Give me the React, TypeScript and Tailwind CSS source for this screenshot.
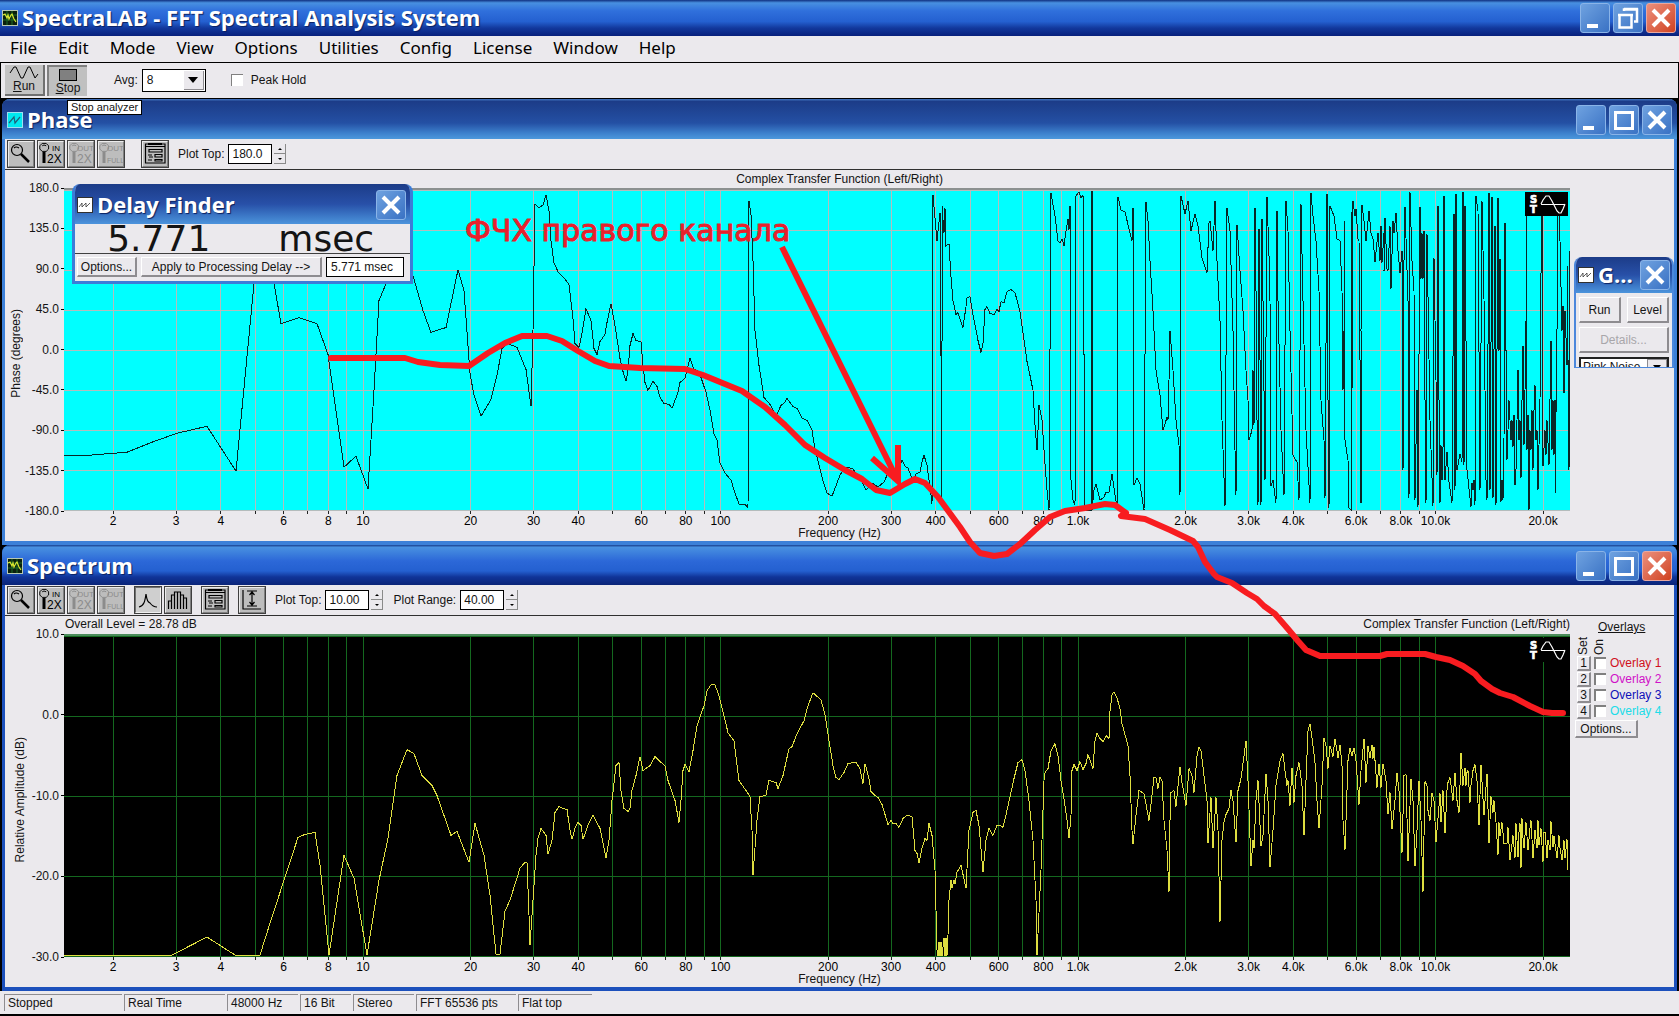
import type { ReactNode } from "react"
import clsx from "clsx"

const menuItems = ["File", "Edit", "Mode", "View", "Options", "Utilities", "Config", "License", "Window", "Help"]

const statusCells = [
  { text: "Stopped", width: "w-[118px]" },
  { text: "Real Time", width: "w-[101px]" },
  { text: "48000 Hz", width: "w-[71px]" },
  { text: "16 Bit", width: "w-[51px]" },
  { text: "Stereo", width: "w-[61px]" },
  { text: "FFT 65536 pts", width: "w-[100px]" },
  { text: "Flat top", width: "w-[74px]" },
]

const overlays = [
  { id: 1, color: "text-[#d01020]" },
  { id: 2, color: "text-[#d010c8]" },
  { id: 3, color: "text-[#1010b8]" },
  { id: 4, color: "text-[#20dce8]" },
]

// Both plots share the same logarithmic frequency axis
const PLOT_X = 64
const PLOT_W = 1506
const DECADE = 357.5
const freqToX = (hz: number) => 363 + (Math.log10(hz) - 1) * DECADE - PLOT_X

const gridFreqs: number[] = []
for (const base of [1, 10, 100, 1000, 10000]) {
  for (let n = 1; n < 10; n++) {
    const hz = base * n
    if (hz >= 2 && hz <= 20000) gridFreqs.push(hz)
  }
}

const freqLabels = gridFreqs
  .filter((hz) => [1, 2, 3, 4, 6, 8].includes(Number(String(hz)[0])))
  .map((hz) => ({ hz, text: hz >= 1000 ? `${(hz / 1000).toFixed(1)}k` : String(hz) }))

const phaseTrace =
  "64,455 90,455 127,452 152,442 177,433 207,426 236,471 254,283 258,230 270,250 274,283 281,323 299,317 317,323 328,354 344,467 356,456 368,489 374,390 379,300 386,283 396,240 413,275 423,310 431,332 436,330 446,327 458,269 464,290 470,373 474,395 481,416 491,399 497,375 502,348 508,343 517,347 526,369 531,406 533,330 535,203 539,207 543,204 546,194 549,210 551,240 554,262 558,271 564,277 569,284 573,318 575,343 579,347 582,333 586,308 591,320 594,348 597,354 600,341 605,334 607,322 611,303 615,325 620,358 623,371 626,381 628,370 630,345 633,333 636,340 641,341 643,365 645,382 648,390 653,381 657,386 660,397 664,403 669,404 672,408 678,392 680,382 685,378 690,358 694,369 699,371 703,383 706,392 710,410 714,434 717,440 720,463 725,473 731,480 735,493 739,504 745,504 748,508 749,200 751,214 753,260 755,330 759,365 764,397 770,404 776,416 781,405 784,403 787,398 793,406 797,408 802,418 807,420 812,430 815,449 819,465 823,481 827,493 832,496 837,483 840,475 843,470 848,467 853,469 860,478 866,490 872,483 878,487 884,482 887,475 894,470 899,469 902,460 905,466 908,468 913,481 916,474 920,472 922,462 924,455 927,465 931,495 932,504 933,194 937,240 940,212 941,356 941,502 942,340 942,205 944,232 945,207 946,245 949,243 951,276 953,300 956,314 958,312 960,318 963,327 966,306 967,297 970,296 973,314 978,340 981,352 983,343 985,309 987,306 990,313 994,314 997,309 999,311 1001,301 1004,302 1007,291 1011,289 1015,292 1020,311 1023,332 1027,361 1030,375 1033,390 1035,425 1037,450 1038,430 1039,405 1042,420 1044,450 1047,490 1049,510 1051,192 1055,215 1058,240 1060,242 1062,238 1064,245 1066,230 1068,218 1069,229 1070,205 1071,480 1073,500 1075,505 1076,195 1079,191 1081,197 1083,194 1085,510 1091,510 1091,191 1092,191 1092,510 1094,490 1096,484 1100,500 1104,497 1106,492 1109,492 1112,474 1114,488 1117,508 1118,196 1121,209 1125,211 1129,228 1132,240 1133,207 1134,485 1137,478 1140,484 1144,510 1146,201 1148,220 1150,260 1153,310 1156,370 1160,395 1163,430 1167,417 1168,420 1169,380 1170,330 1173,370 1176,420 1179,445 1180,495 1181,195 1185,213 1188,200 1191,230 1195,213 1198,225 1202,257 1207,272 1209,222 1210,220 1213,250 1215,200 1217,260 1220,320 1222,420 1225,506 1227,207 1230,230 1233,330 1235,450 1236,495 1237,224 1240,270 1243,310 1246,370 1248,400 1249,440 1252,430 1253,370 1254,425 1255,207 1256,290 1257,420 1258,505 1259,228 1260,360 1261,505 1262,218 1263,300 1265,480 1267,196 1269,255 1270,300 1271,486 1273,480 1276,503 1277,210 1278,300 1281,430 1284,495 1286,200 1288,230 1290,330 1293,455 1297,462 1299,500 1301,203 1303,300 1306,430 1310,503 1311,192 1313,215 1316,240 1319,290 1321,400 1324,440 1325,498 1327,193 1328,400 1329,508 1330,205 1334,215 1337,238 1340,240 1342,290 1343,390 1344,330 1344,220 1345,440 1348,460 1349,508 1351,510 1351,211 1352,390 1353,200 1355,215 1356,208 1358,238 1359,240 1360,360 1361,503 1361,330 1362,204 1364,220 1366,240 1369,210 1371,232 1373,238 1375,261 1378,232 1380,260 1381,225 1382,262 1384,232 1384,270 1385,217 1387,268 1388,270 1390,225 1391,288 1393,220 1394,232 1395,222 1396,212 1398,250 1400,272 1402,250 1403,470 1404,260 1405,206 1408,300 1409,498 1410,191 1412,260 1414,290 1415,500 1417,390 1418,507 1420,206 1421,278 1422,232 1423,278 1424,230 1425,400 1426,503 1427,233 1430,420 1433,506 1434,257 1436,380 1437,475 1438,205 1439,400 1440,503 1441,445 1442,480 1443,450 1444,195 1444,340 1445,480 1447,452 1449,482 1452,503 1454,213 1455,490 1456,193 1457,470 1460,454 1462,462 1463,191 1464,465 1465,205 1466,340 1467,470 1471,507 1472,483 1473,490 1474,480 1475,505 1476,195 1478,210 1480,490 1482,200 1484,298 1486,480 1487,500 1489,192 1490,490 1492,196 1493,498 1494,350 1495,225 1496,505 1498,197 1499,350 1500,258 1501,502 1502,480 1503,500 1504,440 1505,222 1506,350 1507,460 1509,400 1511,440 1512,420 1513,447 1514,415 1515,485 1516,470 1518,370 1519,440 1520,420 1521,478 1522,400 1523,345 1524,445 1525,390 1526,320 1526,215 1527,450 1528,415 1529,510 1530,430 1531,450 1532,410 1533,470 1534,410 1535,385 1536,440 1537,430 1538,490 1540,400 1541,273 1542,210 1543,466 1545,430 1546,455 1547,420 1549,465 1550,400 1551,340 1552,450 1553,400 1554,455 1555,400 1555,493 1557,330 1558,215 1559,195 1560,240 1562,330 1563,305 1564,393 1565,310 1567,365 1567,265 1568,360 1569,470 1570,250"

const spectrumTrace =
  "64,955 172,955 207,937 235,955 260,955 271,920 298,837 305,834 315,832 320,865 329,955 344,855 354,878 367,955 379,880 388,838 397,775 407,749 414,753 422,775 432,785 437,795 451,835 457,831 469,862 475,823 484,855 490,895 496,954 500,954 505,911 510,900 520,868 525,862 527,862 529,915 530,945 533,900 536,855 538,838 541,828 546,835 548,854 552,840 555,812 559,806 563,808 567,809 570,830 572,839 575,828 578,822 581,825 583,839 588,825 593,815 600,828 606,858 609,840 612,800 616,765 619,762 621,790 624,808 628,811 630,808 632,790 636,775 640,756 643,770 650,765 655,756 660,761 665,765 668,780 675,800 679,822 681,800 683,770 685,764 689,771 693,750 697,725 704,705 707,690 711,684 715,684 719,695 724,715 728,732 734,740 739,780 746,790 750,796 752,830 753,875 757,820 760,796 766,795 769,780 776,782 778,788 783,775 789,748 792,746 797,733 804,720 808,705 813,692 821,699 825,714 829,740 833,765 836,777 839,779 844,772 848,763 853,762 856,762 860,768 863,783 865,763 869,778 871,791 875,795 878,797 882,804 888,824 891,820 893,823 896,823 899,827 903,818 907,815 912,816 915,850 917,853 919,863 922,848 925,838 927,840 929,823 932,835 935,870 937,950 938,956 939,942 940,956 941,942 942,956 944,938 945,956 946,938 947,956 948,935 949,900 951,880 952,888 954,880 955,884 957,872 961,865 966,888 969,830 973,812 976,810 979,825 983,872 986,840 989,828 993,835 997,825 1000,825 1003,827 1007,810 1014,778 1018,762 1022,759 1025,770 1029,800 1033,840 1036,900 1037,955 1041,870 1044,780 1045,772 1048,768 1051,750 1055,743 1058,755 1061,780 1065,805 1067,820 1069,838 1071,815 1072,770 1074,764 1077,770 1080,761 1083,769 1086,763 1088,754 1093,768 1095,740 1097,732 1100,738 1103,741 1106,735 1109,738 1110,710 1112,694 1114,691 1117,697 1120,708 1122,723 1128,745 1130,775 1132,830 1133,844 1136,815 1139,790 1144,793 1149,820 1152,795 1154,777 1156,777 1158,788 1160,777 1162,780 1164,820 1167,850 1169,892 1170,820 1171,792 1174,790 1176,806 1180,766 1182,782 1186,805 1189,768 1192,775 1194,792 1197,755 1199,746 1201,750 1204,775 1207,800 1208,843 1211,797 1213,848 1216,797 1218,830 1220,922 1222,840 1224,822 1226,814 1229,808 1231,790 1233,800 1236,842 1238,790 1241,778 1244,755 1246,740 1248,780 1251,866 1253,840 1254,848 1256,800 1258,780 1261,846 1263,835 1266,773 1268,800 1270,867 1273,830 1276,785 1280,760 1283,753 1285,770 1287,785 1288,780 1290,805 1292,767 1294,802 1296,775 1299,762 1302,785 1304,835 1306,780 1308,730 1310,723 1313,745 1315,762 1317,800 1319,828 1322,785 1324,737 1326,745 1328,768 1330,745 1333,756 1335,738 1338,757 1340,744 1342,765 1343,820 1345,850 1346,820 1348,760 1350,747 1352,755 1354,747 1356,760 1359,804 1361,770 1364,738 1366,782 1368,745 1370,757 1372,744 1373,758 1374,746 1377,787 1379,763 1381,787 1383,763 1386,780 1388,814 1390,792 1392,829 1395,800 1397,772 1399,790 1402,853 1404,775 1406,774 1408,861 1411,778 1413,800 1415,866 1417,830 1419,780 1421,820 1423,892 1425,781 1427,785 1428,810 1430,820 1432,793 1434,800 1436,842 1440,793 1441,822 1443,790 1445,833 1447,790 1448,782 1450,777 1453,800 1455,772 1457,800 1459,812 1460,785 1461,752 1463,785 1465,767 1466,785 1467,772 1468,770 1470,802 1471,785 1473,770 1475,764 1477,780 1479,825 1481,764 1484,815 1487,773 1489,843 1491,796 1493,812 1494,800 1496,822 1498,855 1499,822 1500,836 1502,822 1504,843 1507,843 1508,827 1510,860 1513,835 1515,858 1516,823 1518,857 1519,832 1520,823 1521,868 1522,818 1523,838 1524,848 1526,822 1527,836 1528,850 1530,828 1531,820 1533,858 1535,830 1537,848 1538,820 1539,845 1541,828 1543,862 1544,832 1545,832 1547,858 1548,840 1550,850 1551,821 1553,847 1554,836 1557,858 1559,835 1560,848 1562,860 1564,840 1565,858 1567,839 1568,870"

const phaseAnnotation =
  "M331 358 H405 L418 362 L440 365 L469 366 L488 353 L505 343 L522 336 L547 336 L562 341 L578 351 L595 361 L609 366 L640 368 L685 369 L703 375 L720 382 L742 391 L765 407 L785 425 L805 445 L825 458 L845 470 L862 479 L876 490 L890 493 L905 484 L915 479 L925 483 L938 497 L960 527 L970 542 L980 553 L994 556 L1007 554 L1020 544 L1035 530 L1050 517 L1065 511 L1085 508 L1105 504 L1115 505 L1126 513 L1121 516 L1145 519 L1170 530 L1193 541 L1198 547 L1205 562 L1214 574 L1217 577 L1232 583 L1247 593 L1257 599 L1264 606 L1275 614 L1288 629 L1298 641 L1306 650 L1320 656 H1380 L1387 654 H1425 L1436 657 L1450 660 L1463 666 L1475 674 L1481 681 L1492 689 L1500 693 L1513 697 L1530 706 L1543 712 L1552 713 H1563"

function Caption({ kind, red }: { kind: "min" | "max" | "restore" | "close"; red?: boolean }) {
  const labels = { min: "Minimize", max: "Maximize", restore: "Restore", close: "Close" }
  return (
    <button
      aria-label={labels[kind]}
      className={clsx(
        "size-[30px] shrink-0 rounded-[3px] border bg-gradient-to-br",
        red ? "border-[#e8a8a0] from-[#eb8f7c] to-[#d0401c]" : "border-[#8ab4e8] from-[#6fa2e0] to-[#3a72c4]"
      )}
    >
      <svg viewBox="0 0 28 28" className="size-7 fill-none stroke-white">
        {kind === "min" && <path d="M6 22 h11" strokeWidth="4" />}
        {kind === "max" && <path d="M5.5 7 v15.5 h17 V7 M4 6.5 h20" strokeWidth="3" />}
        {kind === "restore" && <path d="M10 7 V5.5 h13 v12 h-3 M10 5 h14 M5.5 12 v11.5 h12 V12 M4 11 h15" strokeWidth="2.5" />}
        {kind === "close" && <path d="M6 6 L22 22 M22 6 L6 22" strokeWidth="4" />}
      </svg>
    </button>
  )
}

function AppIcon({ kind }: { kind: "spectrum" | "phase" | "tool" }) {
  const style = {
    spectrum: { bg: "#0a200c", frame: "#b8c8b0", line: "#d8e830" },
    phase: { bg: "#00e8f0", frame: "#9ae0f0", line: "#20607a" },
    tool: { bg: "#ffffff", frame: "#303030", line: "#333333" },
  }[kind]
  return (
    <svg viewBox="0 0 16 16" className="size-4 shrink-0">
      <rect x=".5" y=".5" width="15" height="15" fill={style.bg} stroke={style.frame} />
      {kind === "spectrum" && <path d="M1 5 H15 M1 10 H15 M5 1 V15 M10 1 V15" stroke="#1c6a28" />}
      <path
        d={kind === "spectrum" ? "M1 5 L3 4 L5 8 L6 5 L7 9 L9 5 L10 4 L12 9 L14 12" : kind === "phase" ? "M2 11 L7 5 L8 11 L13 5" : "M2 10 L5 6 V10 L9 6 V10 L13 6"}
        fill="none"
        stroke={style.line}
        strokeWidth={kind === "tool" ? 0.8 : 1.2}
      />
    </svg>
  )
}

function TitleText({ children }: { children: ReactNode }) {
  return (
    <h2 className="truncate pb-[2px] font-['Open_Sans',sans-serif] text-[22px] leading-7 font-bold text-white [text-shadow:1px_1px_1px_#0a2060]">
      {children}
    </h2>
  )
}

const lens = <path d="M5 3 h5 l3 3 v4 l-3 3 H5 L2 10 V6 Z M5 6 q2 -2 5 0" />

function ToolIcon({ name }: { name: string }) {
  return (
    <svg viewBox="0 0 24 26" className="h-[26px] w-6 fill-none stroke-current" strokeWidth="1.2">
      {name === "Zoom" && (
        <>
          <circle cx="8" cy="9" r="5.5" />
          <path d="M5 7 q2 -2 5 0" />
          <path d="M12 13 L20 21" strokeWidth="2.5" />
        </>
      )}
      {["Zoom in 2X", "Zoom out 2X", "Zoom out full"].includes(name) && (
        <>
          <g transform="scale(.8) translate(-1 0)">{lens}</g>
          <path d="M5 11 V22" strokeWidth="3" />
          <g className="fill-current stroke-none font-['Liberation_Sans',sans-serif]">
            <text x={name === "Zoom in 2X" ? 13 : 8} y="10" fontSize="8">
              {name === "Zoom in 2X" ? "IN" : "OUT"}
            </text>
            <text x="8" y="22" fontSize={name === "Zoom out full" ? 7 : 12}>
              {name === "Zoom out full" ? "FULL" : "2X"}
            </text>
          </g>
        </>
      )}
      {name === "Options" && (
        <>
          <path d="M2.5 3 H22 V22 H2.5 Z M2 5.500 H22" />
          <path d="M5 3 H19" strokeWidth="2" />
          <path d="M6 8.500 H19 V11 H6 Z M12 13.500 H19 V16 H12 Z M12 18.500 H19 V20 H12 Z M5 14 H9 M6 16 H10 M5 19 H9" />
        </>
      )}
      {name === "Line" && <path d="M3 20 C8 19 9 14 10 7 C11 14 12 15 14 16 C17 20 19 20 21 20" />}
      {name === "Bars" && <path d="M2.5 22 V14 H5.500 V22 M5.500 14 V8 H8.500 V22 M8.500 8 V5 H11.500 V22 M11.500 5 H14.500 V22 M14.500 8 H17.500 V22 M17.500 11 H20.500 V22" />}
      {name === "Scale" && <path d="M3 3 V22 H21 M7 4 H17 M7 19 H17 M12 5 V18 M9.500 8 L12 5 L14.500 8 M9.500 15 L12 18 L14.500 15" />}
    </svg>
  )
}

function ToolButton({ name, disabled, pressed }: { name: string; disabled?: boolean; pressed?: boolean }) {
  return (
    <button
      aria-label={name}
      disabled={disabled}
      className={clsx(
        "flex h-7 w-7 shrink-0 items-center justify-center border-2 outline outline-1 -outline-offset-1 outline-[#404040]",
        pressed
          ? "border-t-[#707070] border-r-[#f0f0f0] border-b-[#f0f0f0] border-l-[#707070] bg-[#cfcfcf]"
          : "border-t-[#ececec] border-r-[#808080] border-b-[#808080] border-l-[#ececec] bg-[#bdbdbd]",
        disabled ? "text-[#8c8c8c]" : "text-black"
      )}
    >
      <ToolIcon name={name} />
    </button>
  )
}

function SpinField({ label, value }: { label: string; value: string }) {
  return (
    <label className="flex items-center gap-1">
      <span>{label}</span>
      <input defaultValue={value} className="h-5 w-11 border border-black bg-white px-[3px] text-xs" />
      <span className="ml-[-2px] flex flex-col">
        <button aria-label={`${label} up`} className="flex h-[10px] w-3 items-center justify-center border-r border-b border-[#8a8a8a]">
          <svg viewBox="0 0 4 2" className="h-[2px] w-1"><path d="M0 2 L2 0 L4 2 Z" /></svg>
        </button>
        <button aria-label={`${label} down`} className="flex h-[10px] w-3 items-center justify-center border-r border-b border-[#8a8a8a]">
          <svg viewBox="0 0 4 2" className="h-[2px] w-1"><path d="M0 0 L2 2 L4 0 Z" /></svg>
        </button>
      </span>
    </label>
  )
}

function PushButton({ children, className, disabled }: { children: ReactNode; className?: string; disabled?: boolean }) {
  return (
    <button
      disabled={disabled}
      className={clsx(
        "border-t border-r-2 border-b-2 border-l border-t-white border-r-[#8e8c90] border-b-[#8e8c90] border-l-white bg-[#ebe9ed] whitespace-nowrap",
        disabled && "text-[#a8a6aa]",
        className
      )}
    >
      {children}
    </button>
  )
}

// S/T marker with one sine period, shown in the corner of each plot
function SineBadge() {
  return (
    <svg viewBox="0 0 43 24" className="absolute top-[2px] right-[2px] h-6 w-[43px] bg-black">
      <g className="fill-white stroke-white font-['DejaVu_Sans',sans-serif]" fontSize="10" fontWeight="700" strokeWidth=".7">
        <text x="5" y="11">S</text>
        <text x="5" y="21">T</text>
      </g>
      <path d="M16 12.500 H40 M16 12 L18 8 L21 4 H24 L27 9 L32 19 L34 21 H36 L38 17 L40 12" fill="none" stroke="#fff" strokeWidth="1.2" />
    </svg>
  )
}

type PlotProps = {
  trace: string
  top: number
  yTicks: string[]
  yTitle: string
  dark?: boolean
  header?: ReactNode
  side?: ReactNode
}

function Plot({ trace, top, yTicks, yTitle, dark, header, side }: PlotProps) {
  const grid = dark ? "#14681f" : "#b4bcbc"
  return (
    <div className="flex min-h-0 flex-1 flex-col">
      <div className="flex min-h-0 flex-1">
        <div className="flex min-w-0 flex-1 flex-col">
          {header}
          <div className="flex min-h-0 flex-1">
            <div className="flex w-[59px] shrink-0">
              <div className="flex w-6 items-center justify-end pt-2">
                <span className="w-[18px] rotate-180 leading-[18px] whitespace-nowrap [writing-mode:vertical-rl]">{yTitle}</span>
              </div>
              <div className="flex flex-1 flex-col justify-between">
                {yTicks.map((tick) => (
                  <span key={tick} className="flex h-0 items-center justify-end gap-[2px]">
                    {tick}
                    <i className="h-px w-[3px] bg-black" />
                  </span>
                ))}
              </div>
            </div>
            <div className={clsx("relative min-w-0 flex-1 border-t-2", dark ? "border-[#4c8c5c] bg-black" : "border-[#8c9090] bg-[#00ffff]")}>
              <svg
                viewBox={`${PLOT_X} ${top} ${PLOT_W} 322`}
                preserveAspectRatio="none"
                className="absolute inset-0 size-full"
                shapeRendering="crispEdges"
              >
                {gridFreqs.map((hz) => (
                  <path key={hz} d={`M${freqToX(hz) + PLOT_X} ${top} v322`} stroke={grid} vectorEffect="non-scaling-stroke" />
                ))}
                {yTicks.map((tick, i) => (
                  <path key={tick} d={`M${PLOT_X} ${top + (i * 321.5) / (yTicks.length - 1)} h${PLOT_W}`} stroke={grid} vectorEffect="non-scaling-stroke" />
                ))}
                <polyline points={trace} fill="none" stroke={dark ? "#dede40" : "#082828"} vectorEffect="non-scaling-stroke" />
              </svg>
              <SineBadge />
            </div>
          </div>
          <div className="ml-[59px] h-4">
            <svg className="h-4 w-full overflow-visible" fontSize="12">
              {gridFreqs.map((hz) => {
                const x = `${(freqToX(hz) / PLOT_W) * 100}%`
                return <line key={hz} x1={x} x2={x} y1="0" y2="3" stroke="#222" shapeRendering="crispEdges" />
              })}
              {freqLabels.map(({ hz, text }) => (
                <text key={hz} x={`${(freqToX(hz) / PLOT_W) * 100}%`} y="14" textAnchor="middle">
                  {text}
                </text>
              ))}
            </svg>
          </div>
        </div>
        <div className="w-[104px] shrink-0">{side}</div>
      </div>
      <div className="h-[14px] text-center leading-[13px]">Frequency (Hz)</div>
    </div>
  )
}

function DelayFinder() {
  return (
    <section className="absolute top-[85px] left-[67px] w-[341px] overflow-hidden rounded-t-lg border-[3px] border-t-0 border-[#3c7cd8] bg-[#ebe9ed]">
      <header className="flex h-10 items-center gap-1 bg-gradient-to-b from-[#1c3c88] via-[#2850a8] to-[#4c94dc] pt-px pr-1 pl-[2px]">
        <AppIcon kind="tool" />
        <TitleText>Delay Finder</TitleText>
        <span className="flex-1" />
        <Caption kind="close" />
      </header>
      <div className="grid h-[30px] grid-cols-2 border-b border-[#404040] text-center font-['DejaVu_Sans',sans-serif] text-4xl">
        <span className="leading-[30px]">5.771</span>
        <span className="leading-[30px]">msec</span>
      </div>
      <div className="flex h-[27px] items-center gap-1 px-[2px] pb-px">
        <PushButton className="h-5 w-[60px]">Options...</PushButton>
        <PushButton className="h-5 flex-1">Apply to Processing Delay --&gt;</PushButton>
        <input aria-label="Delay" defaultValue="5.771 msec" className="mr-1 h-5 w-[78px] border border-black bg-white px-1" />
      </div>
    </section>
  )
}

function Generator() {
  return (
    <section className="absolute top-[158px] right-0 h-[111px] w-[100px] overflow-hidden rounded-t-lg border-x-2 border-b border-[#4c88dc] bg-[#ebe9ed]">
      <header className="flex h-9 items-center gap-1 bg-gradient-to-b from-[#1c3c88] via-[#2850a8] to-[#4c94dc] px-[2px]">
        <AppIcon kind="tool" />
        <div className="min-w-0 flex-1">
          <TitleText>G...</TitleText>
        </div>
        <Caption kind="close" />
      </header>
      <div className="grid grid-cols-2 gap-x-[6px] gap-y-1 p-[3px] pt-1">
        <PushButton className="h-[26px]">Run</PushButton>
        <PushButton className="h-[26px]">Level</PushButton>
        <PushButton className="col-span-2 h-[26px]" disabled>
          Details...
        </PushButton>
        <div className="relative col-span-2">
          <select aria-label="Signal type" className="h-5 w-full appearance-none border-2 border-[#202020] bg-white pl-[2px] text-xs">
            <option>Pink Noise</option>
          </select>
          <span className="pointer-events-none absolute top-[2px] right-[2px] flex h-4 w-5 items-center justify-center border border-[#8e8c90] bg-[#ebe9ed]">
            <svg viewBox="0 0 8 5" className="h-[5px] w-2"><path d="M0 0 H8 L4 5 Z" /></svg>
          </span>
        </div>
      </div>
    </section>
  )
}

function OverlayPanel() {
  return (
    <div className="flex flex-col pt-[3px] pl-[5px]">
      <div className="pl-[23px] leading-4 underline">Overlays</div>
      <div className="flex h-5 items-end gap-1 pl-[2px]">
        <span className="rotate-180 leading-3 [writing-mode:vertical-rl]">Set</span>
        <span className="rotate-180 leading-3 [writing-mode:vertical-rl]">On</span>
      </div>
      {overlays.map(({ id, color }) => (
        <div key={id} className="flex h-4 items-center gap-[3px] pl-[2px]">
          <PushButton className="h-[15px] w-[14px] leading-3">{id}</PushButton>
          <label className={clsx("flex items-center gap-1", color)}>
            <input type="checkbox" className="size-3 appearance-none border-t-2 border-l-2 border-t-[#808080] border-l-[#808080] bg-white" />
            Overlay {id}
          </label>
        </div>
      ))}
      <PushButton className="mt-px h-[18px] w-[63px] leading-3">Options...</PushButton>
    </div>
  )
}

function MdiWindow({ title, active, tools, children }: { title: string; active?: boolean; tools: ReactNode; children: ReactNode }) {
  return (
    <section
      className={clsx(
        "relative flex min-h-0 flex-1 flex-col rounded-t-lg border-x-[3px] border-b-4",
        active ? "border-[#1c50bc]" : "border-[#3c80d8]"
      )}
    >
      <header
        className={clsx(
          "-mx-[3px] flex h-10 shrink-0 items-center gap-1 rounded-t-lg pt-[2px] pr-[5px] pl-[5px]",
          active
            ? "bg-[linear-gradient(#184090,#4890e0_6%,#2c68d8_40%,#2460d0_65%,#103498_80%,#0a2478)]"
            : "bg-[linear-gradient(#4478c4,#1c3c88_6%,#2450a4_60%,#3c80cc_85%,#4c98dc)]"
        )}
      >
        <AppIcon kind={active ? "spectrum" : "phase"} />
        <TitleText>{title}</TitleText>
        <span className="flex-1" />
        <div className="flex gap-[3px]">
          <Caption kind="min" />
          <Caption kind="max" />
          <Caption kind="close" red={active} />
        </div>
      </header>
      <div className="flex h-[31px] shrink-0 items-center border-b border-[#303030] bg-[#ebe9ed] pl-[2px]">{tools}</div>
      <div className="flex min-h-0 flex-1 flex-col bg-[#ebe9ed]">{children}</div>
    </section>
  )
}

function ZoomTools() {
  return (
    <div className="mr-[9px] flex gap-[2px]">
      <ToolButton name="Zoom" />
      <ToolButton name="Zoom in 2X" />
      <ToolButton name="Zoom out 2X" disabled />
      <ToolButton name="Zoom out full" disabled />
    </div>
  )
}

export default function App() {
  return (
    <div className="relative flex h-screen min-h-[700px] flex-col overflow-hidden bg-black font-['Liberation_Sans',Arial,sans-serif] text-xs text-[#141414]">
      <header className="flex h-9 shrink-0 items-center gap-1 bg-[linear-gradient(#103080,#4890e0_8%,#3070dc_30%,#2460d0_60%,#12389c_78%,#08207c)] pr-[3px] pl-[2px]">
        <AppIcon kind="spectrum" />
        <h1 className="pb-[2px] font-['Open_Sans',sans-serif] text-[22px] leading-7 font-bold text-white [text-shadow:1px_1px_1px_#0a2060]">
          SpectraLAB - FFT Spectral Analysis System
        </h1>
        <span className="flex-1" />
        <div className="flex gap-[3px]">
          <Caption kind="min" />
          <Caption kind="restore" />
          <Caption kind="close" red />
        </div>
      </header>

      <nav className="flex h-[26px] shrink-0 items-center gap-[21px] bg-[#ebe9ed] pb-[2px] pl-[10px] font-['Noto_Sans',sans-serif] text-[17px] leading-6 text-black">
        {menuItems.map((item) => (
          <button key={item}>{item}</button>
        ))}
      </nav>

      <div className="mx-px mt-px flex h-[35px] shrink-0 items-center bg-[#ebe9ed] pb-px pl-1">
        <button className="flex h-[31px] w-10 flex-col items-center border-r-2 border-b-2 border-[#707070] bg-[#c4c4c4]">
          <svg viewBox="0 0 30 14" className="h-[14px] w-[30px] fill-none stroke-black"><path d="M1 8 L5 2 L7 2 L12 13 L14 13 L19 2 L21 2 L26 13 L29 9" /></svg>
          <span className="leading-[14px]"><u>R</u>un</span>
        </button>
        <button className="ml-[2px] flex h-[31px] w-10 flex-col items-center border-t-2 border-l-2 border-[#808080] bg-[#c0c0c0]">
          <span className="mt-[2px] h-3 w-[18px] border border-black bg-[#808080]" />
          <span className="leading-[14px]"><u>S</u>top</span>
        </button>
        <label className="ml-[27px] flex items-center gap-1">
          Avg:
          <span className="relative">
            <select className="h-[23px] w-16 appearance-none border border-black bg-white pl-1 text-xs">
              <option>8</option>
            </select>
            <span className="pointer-events-none absolute top-[2px] right-[2px] flex h-[19px] w-5 items-center justify-center border-r border-b border-[#8e8c90] bg-[#ebe9ed]">
              <svg viewBox="0 0 10 6" className="h-[6px] w-[10px]"><path d="M0 0 H10 L5 6 Z" /></svg>
            </span>
          </span>
        </label>
        <label className="ml-[25px] flex items-center gap-2">
          <input type="checkbox" className="size-3 appearance-none border-t border-l border-[#808080] bg-white" />
          Peak Hold
        </label>
      </div>

      <main className="mt-px flex min-h-0 flex-1 flex-col px-[2px]">
        <MdiWindow
          title="Phase"
          tools={
            <>
              <ZoomTools />
              <div className="mr-[9px] ml-[7px]">
                <ToolButton name="Options" />
              </div>
              <SpinField label="Plot Top:" value="180.0" />
            </>
          }
        >
          <div className="h-[18px] shrink-0 text-center leading-[18px]">Complex Transfer Function (Left/Right)</div>
          <Plot
            trace={phaseTrace}
            top={189}
            yTitle="Phase (degrees)"
            yTicks={["180.0", "135.0", "90.0", "45.0", "0.0", "-45.0", "-90.0", "-135.0", "-180.0"]}
          />
          <DelayFinder />
          <Generator />
        </MdiWindow>

        <MdiWindow
          title="Spectrum"
          active
          tools={
            <>
              <ZoomTools />
              <div className="mr-[9px] flex gap-[2px]">
                <ToolButton name="Line" pressed />
                <ToolButton name="Bars" />
              </div>
              <div className="mr-[9px] flex gap-[9px]">
                <ToolButton name="Options" />
                <ToolButton name="Scale" />
              </div>
              <div className="flex gap-[10px]">
                <SpinField label="Plot Top:" value="10.00" />
                <SpinField label="Plot Range:" value="40.00" />
              </div>
            </>
          }
        >
          <Plot
            dark
            trace={spectrumTrace}
            top={635}
            yTitle="Relative Amplitude (dB)"
            yTicks={["10.0", "0.0", "-10.0", "-20.0", "-30.0"]}
            header={
              <div className="ml-[59px] flex h-[18px] shrink-0 justify-between pl-px leading-4">
                <span>Overall Level = 28.78 dB</span>
                <span>Complex Transfer Function (Left/Right)</span>
              </div>
            }
            side={<OverlayPanel />}
          />
        </MdiWindow>
      </main>

      <footer className="mb-[2px] flex h-[23px] shrink-0 items-center gap-[2px] bg-[#ebe9ed] pl-1">
        {statusCells.map((cell) => (
          <span key={cell.text} className={clsx("h-[17px] border-t border-l border-[#8e8c90] pl-[3px] leading-4 whitespace-nowrap", cell.width)}>
            {cell.text}
          </span>
        ))}
      </footer>

      <div role="tooltip" className="absolute top-[100px] left-[67px] h-[15px] border border-black bg-white px-[3px] text-[11px] leading-[13px]">
        Stop analyzer
      </div>

      {/* hand-drawn notes on top of everything */}
      <svg viewBox="0 0 1679 1016" preserveAspectRatio="none" className="pointer-events-none absolute inset-0 size-full">
        <path d={phaseAnnotation} fill="none" stroke="#f81c20" strokeWidth="6" strokeLinecap="round" strokeLinejoin="round" />
        <path d="M782 247 L898 481 M872 458 L898 481 V445" fill="none" stroke="#f81c20" strokeWidth="6" />
        <text x="465" y="241" fontSize="30" className="fill-[#e8202c] stroke-[#e8202c] font-['DejaVu_Sans',sans-serif]" strokeWidth="1">
          ФЧХ правого канала
        </text>
      </svg>
    </div>
  )
}
